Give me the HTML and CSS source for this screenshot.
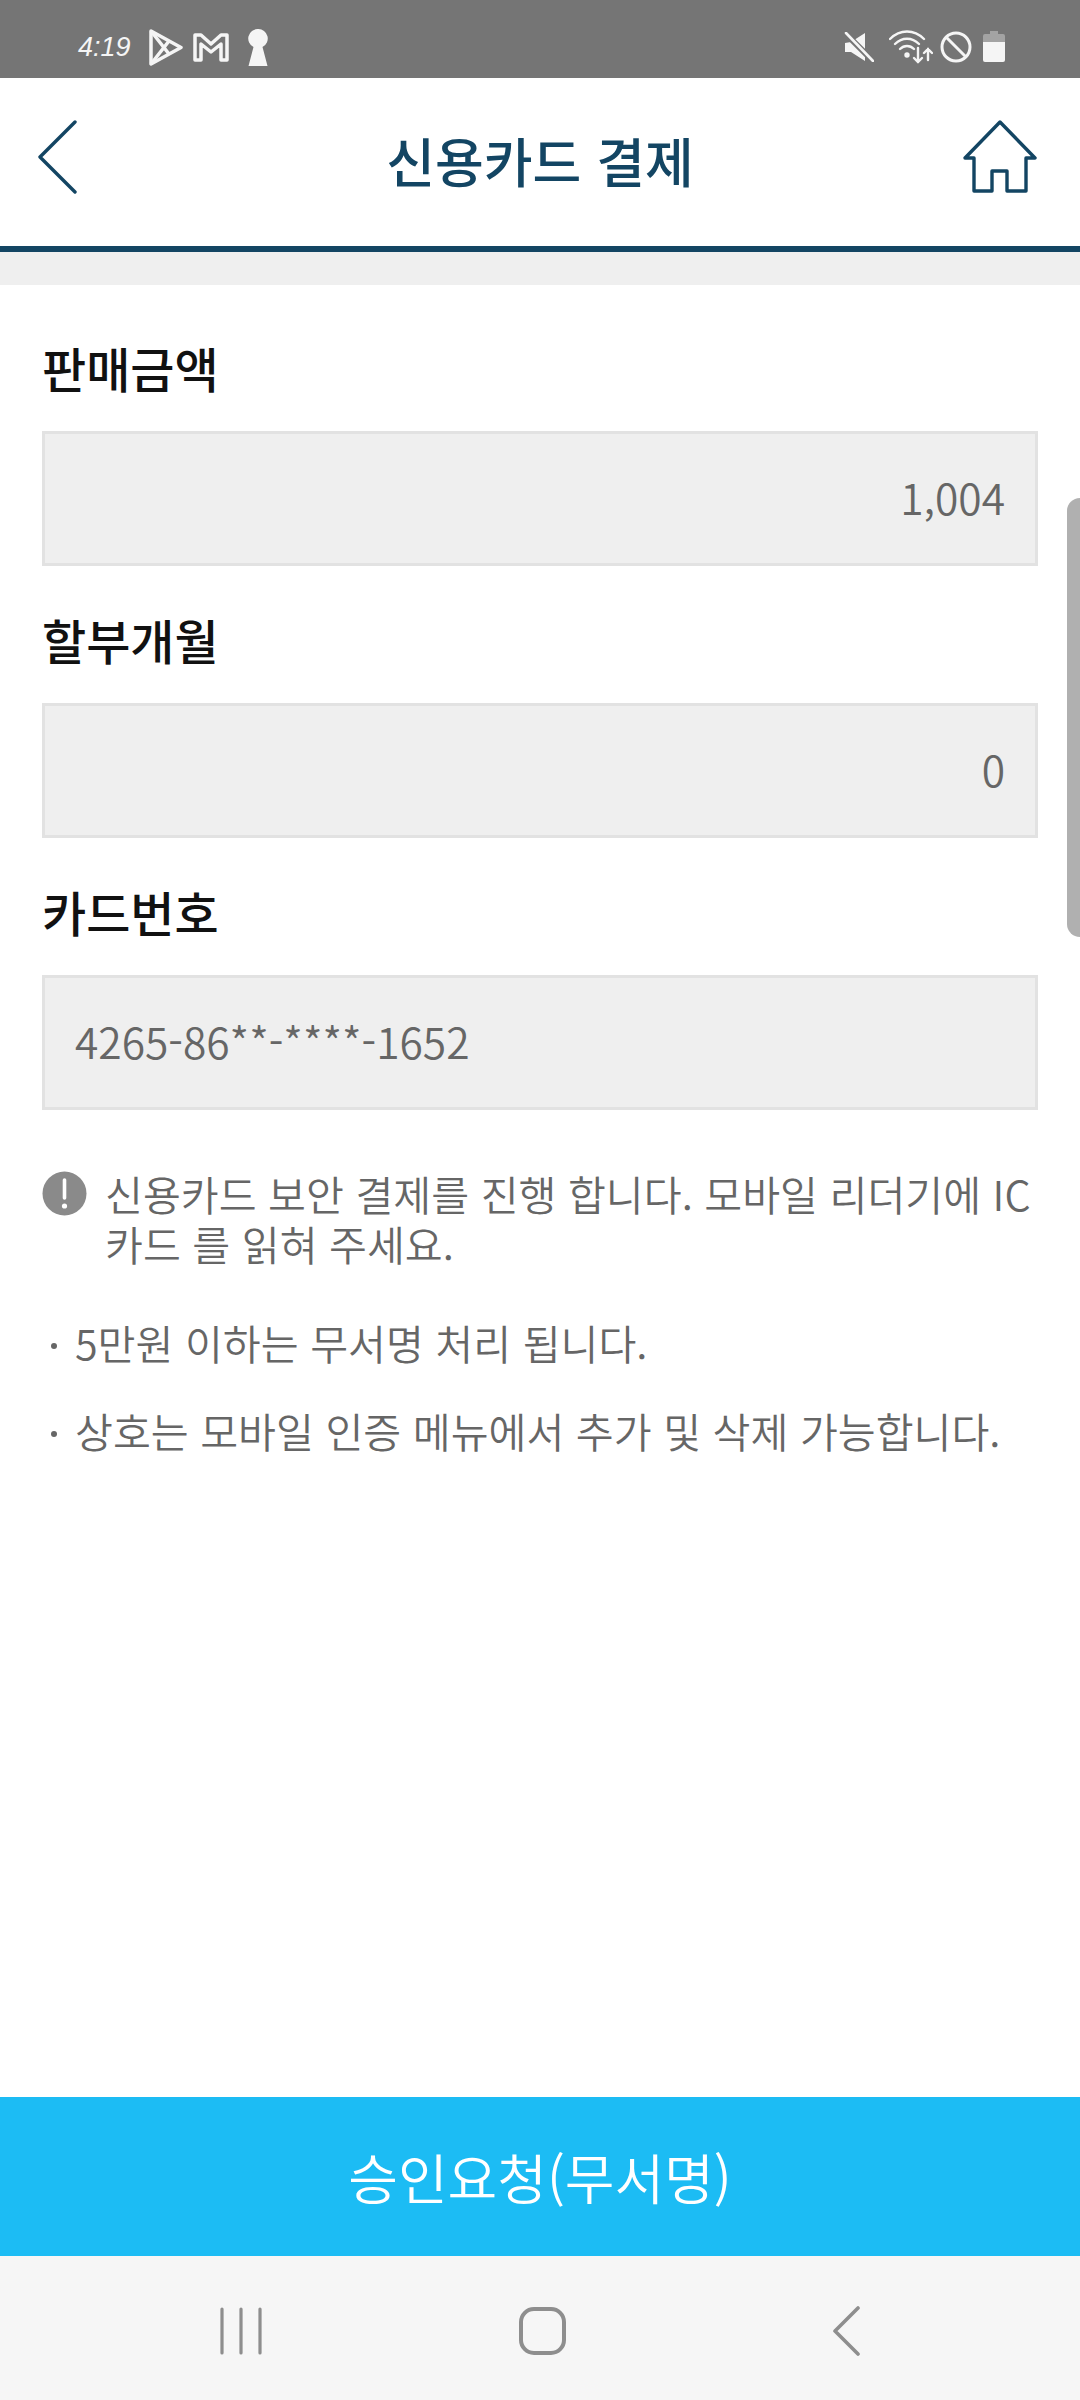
FILE: index.html
```html
<!DOCTYPE html>
<html lang="ko">
	<head>
		<meta charset="utf-8">
		<title>신용카드 결제</title>
		<link rel="stylesheet" href="styles.css">
	</head>
	<body>
		<div class="statusBar">
			<div class="statusLeft">
				<span class="statusTime">4:19</span>
				<svg class="playIcon" width="34" height="37" viewBox="0 0 34 37" fill="none" stroke="#f5f5f5" stroke-width="3.5" stroke-linejoin="round"><path d="M2 2 L32 18.5 L2 35 Z"/><path d="M2 2 L20 25 M2 35 L20 12"/></svg>
				<svg class="gmailIcon" width="36" height="29" viewBox="0 0 36 29" fill="none" stroke="#f5f5f5" stroke-width="3.5" stroke-linejoin="round"><path d="M2 2 L8 2 L18 11 L28 2 L34 2 L34 27 L28 27 L28 11 L18 19 L8 11 L8 27 L2 27 Z"/></svg>
				<svg width="20" height="37" viewBox="0 0 20 37" fill="#f5f5f5"><path d="M10 0 A9.5 9.5 0 0 1 14.5 18 L19.5 37 L0.5 37 L5.5 18 A9.5 9.5 0 0 1 10 0 Z"/></svg>
			</div>
			<div class="statusRight">
				<svg class="muteIcon" width="30" height="30" viewBox="0 0 30 30" fill="#f5f5f5"><path d="M1 11 L7 10 L21 1 L21 29 L7 20 L1 20 Z"/><path d="M2 2 L28 28" stroke="#757575" stroke-width="6"/><path d="M2 1 L29 29" stroke="#f5f5f5" stroke-width="2.6" stroke-linecap="round"/></svg>
				<svg class="wifiIcon" width="44" height="34" viewBox="0 0 44 34" fill="none" stroke="#f5f5f5" stroke-width="2.4" stroke-linecap="round"><path d="M1 9 C11 -1 25 -1 35 9"/><path d="M6 14 C13 7 23 7 30 14"/><path d="M11 19 C15 15 21 15 25 19"/><circle cx="18" cy="25" r="1.5" fill="#f5f5f5"/><path d="M29 18 V32 M25 28 L29 32 L33 28"/><path d="M39 30 V19 M35 23 L39 19 L43 23"/></svg>
				<svg class="banIcon" width="32" height="32" viewBox="0 0 32 32" fill="none" stroke="#f5f5f5" stroke-width="3"><circle cx="16" cy="16" r="14"/><path d="M6 6 L26 26"/></svg>
				<svg width="22" height="32" viewBox="0 0 22 32"><path d="M7 0 H15 V3 H20 Q22 3 22 5 V11 H0 V5 Q0 3 2 3 H7 Z" fill="#a3a3a3"/><path d="M0 11 H22 V29 Q22 31 20 31 H2 Q0 31 0 29 Z" fill="#f5f5f5"/></svg>
			</div>
		</div>

		<header class="header">
			<svg class="backIcon" width="40" height="74" viewBox="0 0 40 74" fill="none" stroke="#134563" stroke-width="3.4" stroke-linecap="round" stroke-linejoin="round"><path d="M37 2 L2 37 L37 72"/></svg>
			<h1 class="headerTitle">신용카드 결제</h1>
			<svg class="homeIcon" width="76" height="74" viewBox="0 0 76 74" fill="none" stroke="#134563" stroke-width="3.4" stroke-linejoin="round" stroke-linecap="round"><path d="M38 2 L73 38 L64 38 L64 71 L45 71 L45 51 L30 51 L30 71 L12 71 L12 38 L3 38 Z"/></svg>
		</header>
		<div class="headerGap"></div>

		<main class="content">
			<div class="field">
				<label class="fieldLabel">판매금액</label>
				<div class="fieldBox alignRight">1,004</div>
			</div>
			<div class="field">
				<label class="fieldLabel">할부개월</label>
				<div class="fieldBox alignRight">0</div>
			</div>
			<div class="field">
				<label class="fieldLabel">카드번호</label>
				<div class="fieldBox">4265-86**-****-1652</div>
			</div>

			<div class="notice">
				<svg class="noticeIcon" width="45" height="45" viewBox="0 0 45 45"><circle cx="22.5" cy="22.5" r="22" fill="#8a8a8a"/><path d="M22.5 9 V27" stroke="#fff" stroke-width="3.6" stroke-linecap="round"/><circle cx="22.5" cy="35" r="2.6" fill="#fff"/></svg>
				<p class="noticeText">신용카드 보안 결제를 진행 합니다. 모바일 리더기에 IC<br>카드 를 읽혀 주세요.</p>
			</div>
			<ul class="hints">
				<li>5만원 이하는 무서명 처리 됩니다.</li>
				<li>상호는 모바일 인증 메뉴에서 추가 및 삭제 가능합니다.</li>
			</ul>
		</main>

		<button class="submitButton">승인요청(무서명)</button>

		<nav class="navBar">
			<svg class="navRecent" width="42" height="48" viewBox="0 0 42 48" fill="none" stroke="#8e8e8e" stroke-width="3.2" stroke-linecap="round"><path d="M2 2 V46 M21 2 V46 M40 2 V46"/></svg>
			<svg class="navHome" width="47" height="48" viewBox="0 0 47 48" fill="none" stroke="#8e8e8e" stroke-width="4"><rect x="2" y="2" width="43" height="44" rx="13"/></svg>
			<svg width="27" height="50" viewBox="0 0 27 50" fill="none" stroke="#8e8e8e" stroke-width="3.6" stroke-linecap="round" stroke-linejoin="round"><path d="M25 2 L2 25 L25 48"/></svg>
		</nav>

		<div class="scrollThumb"></div>
	</body>
</html>
```

FILE: styles.css
```css
* {
	box-sizing: border-box;
}

html, body {
	margin: 0;
	padding: 0;
}

body {
	position: relative;
	width: 1080px;
	height: 2400px;
	display: flex;
	flex-direction: column;
	background-color: #ffffff;
	font-family: "Noto Sans CJK KR", "Noto Sans", sans-serif;
	overflow: hidden;
}

.statusBar {
	height: 78px;
	flex: none;
	display: flex;
	justify-content: space-between;
	align-items: center;
	padding: 16px 75px 0 78px;
	background-color: #757575;
}

.statusLeft, .statusRight {
	display: flex;
	align-items: center;
}

.statusTime {
	width: 51px;
	margin-right: 20px;
	color: #f5f5f5;
	font-family: "Liberation Sans", sans-serif;
	font-size: 27px;
	font-style: italic;
	white-space: nowrap;
}

.playIcon {
	margin-right: 10px;
}

.gmailIcon {
	margin-right: 19px;
}

.muteIcon {
	margin-right: 15px;
}

.wifiIcon {
	margin-right: 7px;
}

.banIcon {
	margin-right: 11px;
}

.header {
	height: 174px;
	flex: none;
	display: grid;
	grid-template-columns: 1fr auto 1fr;
	align-items: center;
	padding: 0 40px 10px;
	border-bottom: 6px solid #134563;
}

.backIcon {
	margin-left: -2px;
}

.homeIcon {
	justify-self: end;
	margin-right: 2px;
}

.headerTitle {
	margin: 6px 0 0;
	color: #134563;
	font-size: 53px;
	font-weight: 500;
	line-height: 70px;
}

.headerGap {
	height: 33px;
	flex: none;
	background-color: #efefef;
}

.content {
	flex: 1;
	padding: 35px 42px 0;
}

.field {
	margin-bottom: 26px;
}

.fieldLabel {
	display: block;
	height: 111px;
	color: #111111;
	font-size: 48px;
	font-weight: 500;
	line-height: 94px;
}

.fieldBox {
	height: 135px;
	padding: 0 30px;
	border: 3px solid #e2e2e2;
	background-color: #efefef;
	color: #666666;
	font-size: 42.5px;
	font-weight: 350;
	line-height: 126px;
}

.alignRight {
	text-align: right;
}

.notice {
	display: flex;
	gap: 18px;
	margin-top: 60px;
}

.noticeIcon {
	flex: none;
	margin-top: 1px;
}

.noticeText {
	margin: -2px -4px 0 0;
	color: #666666;
	font-size: 41.2px;
	font-weight: 350;
	line-height: 50px;
	white-space: nowrap;
}

.hints {
	margin: 48px 0 0;
	padding: 0;
	list-style: none;
	color: #666666;
	font-size: 41.2px;
	font-weight: 350;
	line-height: 52px;
}

.hints li {
	position: relative;
	margin-bottom: 36px;
	padding-left: 33px;
}

.hints li::before {
	content: "";
	position: absolute;
	left: 9px;
	top: 27px;
	width: 6px;
	height: 6px;
	border-radius: 50%;
	background-color: #666666;
}

.submitButton {
	height: 159px;
	flex: none;
	width: 100%;
	border: 0;
	background-color: #1cbcf4;
	color: #ffffff;
	font-family: inherit;
	font-size: 54px;
	font-weight: 350;
}

.navBar {
	height: 144px;
	flex: none;
	display: flex;
	align-items: center;
	padding: 6px 0 0 220px;
	background-color: #f6f6f6;
}

.navRecent {
	margin-right: 257px;
}

.navHome {
	margin-right: 267px;
}

.scrollThumb {
	position: absolute;
	top: 498px;
	right: 0;
	width: 13px;
	height: 439px;
	border-radius: 13px 0 0 13px;
	background-color: #b0b0b0;
}
```
